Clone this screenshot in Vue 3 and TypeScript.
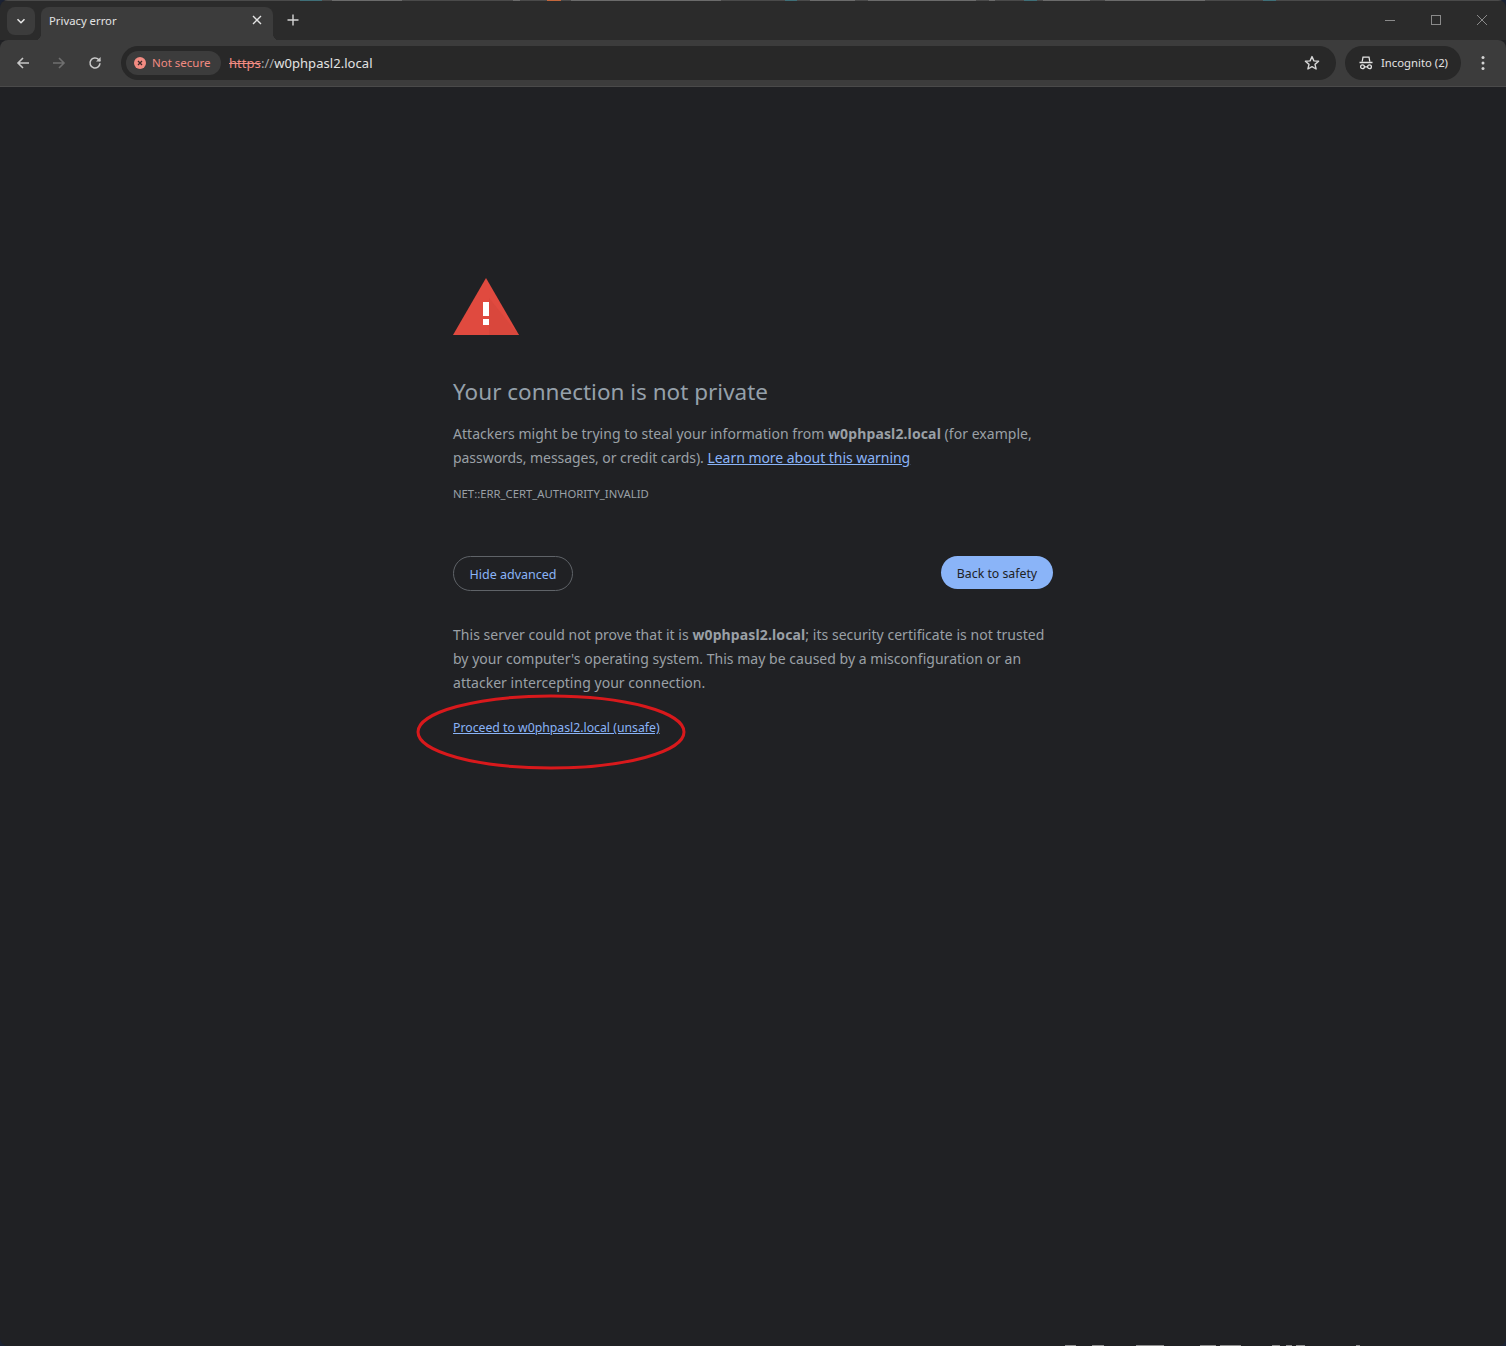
<script setup lang="ts">
const host = 'w0phpasl2.local'

// slivers of the windows behind, visible along the top and bottom edge
const topEdge = [
  { x: 300, w: 22, c: '#3f6f78' }, { x: 332, w: 70, c: '#6b6b6b' }, { x: 513, w: 7, c: '#6b6b6b' },
  { x: 547, w: 14, c: '#c4673c' }, { x: 571, w: 150, c: '#6b6b6b' }, { x: 785, w: 12, c: '#3f6f78' },
  { x: 810, w: 45, c: '#6b6b6b' }, { x: 868, w: 108, c: '#6b6b6b' }, { x: 989, w: 6, c: '#6b6b6b' },
  { x: 1024, w: 13, c: '#3f6f78' }, { x: 1043, w: 47, c: '#6b6b6b' }, { x: 1105, w: 100, c: '#6b6b6b' },
  { x: 1263, w: 13, c: '#3f6f78' },
]
const bottomEdge = [
  { x: 1065, w: 11 }, { x: 1092, w: 12 }, { x: 1136, w: 28 }, { x: 1200, w: 16 }, { x: 1220, w: 21 },
  { x: 1272, w: 8 }, { x: 1286, w: 6 }, { x: 1296, w: 9 }, { x: 1356, w: 4 },
]
</script>

<template>
  <div class="window">
    <i v-for="s in topEdge" :key="s.x" class="sliver top" :style="{ left: s.x + 'px', width: s.w + 'px', background: s.c }"></i>
    <i v-for="s in bottomEdge" :key="s.x" class="sliver bottom" :style="{ left: s.x + 'px', width: s.w + 'px' }"></i>

    <header class="tabstrip">
      <button class="tab-search">
        <svg width="12" height="12" viewBox="0 0 12 12"><path d="M2.500 4.200 6 7.700l3.500-3.500" fill="none" stroke="#e3e3e3" stroke-width="1.600" /></svg>
      </button>
      <div class="tab">
        <span class="tab-title">Privacy error</span>
        <svg width="10" height="10" viewBox="0 0 10 10"><path d="M1 1l8 8M9 1 1 9" stroke="#e3e3e3" stroke-width="1.400" /></svg>
      </div>
      <svg class="new-tab" width="12" height="12" viewBox="0 0 12 12"><path d="M6 .5v11M.5 6h11" stroke="#d5d5d5" stroke-width="1.400" /></svg>
      <div class="win-controls">
        <svg width="12" height="12" viewBox="0 0 12 12"><path d="M1 6.500h10" stroke="#8a8a8a" /></svg>
        <svg width="12" height="12" viewBox="0 0 12 12"><rect x="1.500" y="1.500" width="9" height="9" fill="none" stroke="#8a8a8a" /></svg>
        <svg width="12" height="12" viewBox="0 0 12 12"><path d="M1 1l10 10M11 1 1 11" stroke="#8a8a8a" /></svg>
      </div>
    </header>

    <nav class="toolbar">
      <svg class="nav-icon first" width="16" height="16" viewBox="0 0 16 16"><path d="M14 8H3M8 3 3 8l5 5" fill="none" stroke="#c7c7c7" stroke-width="1.600" /></svg>
      <svg class="nav-icon" width="16" height="16" viewBox="0 0 16 16"><path d="M2 8h11M8 3l5 5-5 5" fill="none" stroke="#6f6f6f" stroke-width="1.600" /></svg>
      <svg class="nav-icon" width="16" height="16" viewBox="0 0 16 16"><path d="M13 8.300A5 5 0 1 1 11.600 4.500L13 6" fill="none" stroke="#c7c7c7" stroke-width="1.600" /><path d="M13.600 2v4.600H9z" fill="#c7c7c7" /></svg>

      <div class="omnibox">
        <div class="chip">
          <svg width="12" height="12" viewBox="0 0 12 12"><circle cx="6" cy="6" r="6" fill="#f28b82" /><path d="M4 4l4 4M8 4 4 8" stroke="#3a2a2a" stroke-width="1.300" /></svg>
          <span class="chip-label">Not secure</span>
        </div>
        <span class="url"><s>https</s><span class="url-sep">://</span>{{ host }}</span>
        <svg class="star" width="16" height="16" viewBox="0 0 16 16"><path d="M8 1.600l1.900 4.300 4.700.4-3.600 3.100 1.100 4.600L8 11.600 3.900 14l1.100-4.600L1.400 6.300l4.700-.4z" fill="none" stroke="#d5d5d5" stroke-width="1.400" stroke-linejoin="round" /></svg>
      </div>

      <div class="incognito">
        <svg width="14" height="14" viewBox="0 0 14 14"><path d="M3.200 5.500 4 1.200h6l.8 4.300M.5 6.500h13" fill="none" stroke="#e3e3e3" stroke-width="1.300" /><circle cx="3.500" cy="10.800" r="1.900" fill="none" stroke="#e3e3e3" stroke-width="1.300" /><circle cx="10.500" cy="10.800" r="1.900" fill="none" stroke="#e3e3e3" stroke-width="1.300" /><path d="M5.400 10.800h3.200" stroke="#e3e3e3" stroke-width="1.200" /></svg>
        <span class="incognito-label">Incognito (2)</span>
      </div>
      <svg class="menu" width="4" height="16" viewBox="0 0 4 16"><circle cx="2" cy="2.500" r="1.500" fill="#d5d5d5" /><circle cx="2" cy="8" r="1.500" fill="#d5d5d5" /><circle cx="2" cy="13.500" r="1.500" fill="#d5d5d5" /></svg>
    </nav>

    <main class="page">
      <div class="content">
        <svg class="warning" width="66" height="57" viewBox="0 0 66 57">
          <path d="M33 0 66 57H0z" fill="#e04a3f" />
          <path d="M36 20 66 57H36z" fill="#d2433a" opacity=".5" />
          <rect x="30" y="24" width="6" height="14" fill="#fff" />
          <rect x="30" y="41" width="6" height="6" fill="#fff" />
        </svg>
        <h1>Your connection is not private</h1>
        <p class="summary">
          Attackers might be trying to steal your information from <strong>{{ host }}</strong> (for example,
          <span class="tight">passwords, messages, or credit cards).</span> <a class="learn" href="#">Learn more about this warning</a>
        </p>
        <div class="error-code">NET::ERR_CERT_AUTHORITY_INVALID</div>
        <div class="actions">
          <button class="btn-outline">Hide advanced</button>
          <button class="btn-primary">Back to safety</button>
        </div>
        <p class="details">
          This server could not prove that it is <strong>{{ host }}</strong>; its security certificate is not trusted
          by your computer's operating system. This may be caused by a misconfiguration or an
          attacker intercepting your connection.
        </p>
        <div class="proceed-row">
          <a class="proceed" href="#">Proceed to {{ host }} (unsafe)</a>
          <svg class="annotation" width="270" height="76" viewBox="0 0 270 76">
            <ellipse cx="135" cy="38" rx="133" ry="36" fill="none" stroke="#d8191c" stroke-width="3" />
          </svg>
        </div>
      </div>
    </main>
  </div>
</template>

<style>
html, body { margin: 0; background: #1b2233; }
</style>

<style scoped>
* { box-sizing: border-box; }
.window { position: relative; width: 1506px; height: 1346px; display: flex; flex-direction: column; overflow: hidden; font-family: "Noto Sans", "Open Sans", sans-serif; background: #202124; border-radius: 8px; }
.sliver { position: absolute; height: 1px; z-index: 2; }
.sliver.top { top: 0; }
.sliver.bottom { bottom: 0; background: #909090; }

.tabstrip { height: 40px; flex: none; background: #2b2b2b; display: flex; align-items: flex-start; padding: 6px 0 0 7px; border-top: 1px solid #4a4a4a; }
.tab-search { width: 28px; height: 28px; border: 0; padding: 0; border-radius: 8px; background: #3c3c3c; display: flex; align-items: center; justify-content: center; }
.tab { position: relative; width: 232px; height: 34px; margin-left: 6px; padding: 0 11px 8px 8px; background: #3c3c3c; border-radius: 8px 8px 0 0; display: flex; align-items: center; justify-content: space-between; }
.tab::before, .tab::after { content: ""; position: absolute; bottom: 0; width: 8px; height: 8px; }
.tab::before { left: -8px; background: radial-gradient(circle at 0 0, #2b2b2b 8px, #3c3c3c 8.500px); }
.tab::after { right: -8px; background: radial-gradient(circle at 100% 0, #2b2b2b 8px, #3c3c3c 8.500px); }
.tab-title { font-size: 11.300px; color: #e3e3e3; }
.new-tab { margin: 7px 0 0 14px; }
.win-controls { margin-left: auto; margin-top: 7px; padding-right: 18px; display: flex; gap: 34px; }

.toolbar { position: relative; height: 47px; flex: none; background: #3c3c3c; border-radius: 8px 8px 0 0; border-bottom: 1px solid #4a4a4a; display: flex; align-items: center; }
.nav-icon { margin-left: 20px; flex: none; }
.nav-icon.first { margin-left: 15px; }
.omnibox { margin-left: 18px; width: 1215px; height: 34px; border-radius: 17px; background: #282828; display: flex; align-items: center; padding: 0 16px 0 5px; }
.chip { height: 24px; width: 95px; border-radius: 12px; background: #3c3c3c; display: flex; align-items: center; gap: 6px; padding-left: 8px; font-size: 11.500px; color: #f28b82; flex: none; }
.chip-label { padding-bottom: 2px; }
.url { margin-left: 8px; font-size: 13px; letter-spacing: .05px; color: #e3e3e3; }
.url s { color: #f28b82; }
.url-sep { color: #a8a8a8; }
.star { margin-left: auto; }
.incognito { margin-left: 9px; width: 116px; height: 34px; border-radius: 17px; background: #282828; display: flex; align-items: center; gap: 8px; padding-left: 14px; font-size: 11.300px; color: #e3e3e3; }
.incognito-label { padding-bottom: 2px; }
.menu { margin-left: 20px; }

.page { flex: 1; padding: 191px 0 0 453px; }
.content { width: 600px; color: #9aa0a6; font-size: 14px; line-height: 24px; }
.warning { display: block; }
h1 { margin: 41px 0 0; font-size: 22.500px; line-height: 32px; font-weight: 400; color: #95a0aa; }
.summary { margin: 14px 0 0; letter-spacing: .03px; }
.details { letter-spacing: .03px; }
.summary strong, .details strong { font-weight: 700; letter-spacing: .13px; }
.tight { letter-spacing: -.05px; }
.learn, .proceed { color: #8ab4f8; }
.learn { letter-spacing: -.04px; }
.error-code { margin-top: 12px; font-size: 11.300px; line-height: 24px; }
.actions { margin-top: 50px; display: flex; justify-content: space-between; align-items: flex-start; }
button { font-family: inherit; }
.btn-outline { width: 120px; height: 35px; border-radius: 18px; border: 1px solid #5f6368; background: transparent; color: #8ab4f8; font-size: 12.500px; padding: 2px 0 0; }
.btn-primary { width: 112px; height: 33px; border-radius: 17px; border: 0; background: #8ab4f8; color: #202124; font-size: 12.300px; padding: 2px 0 0; }
.details { margin: 32px 0 0; }
.proceed-row { position: relative; margin-top: 21px; font-size: 12.250px; line-height: 24px; }
.annotation { position: absolute; left: -37px; top: -22px; pointer-events: none; }
</style>
